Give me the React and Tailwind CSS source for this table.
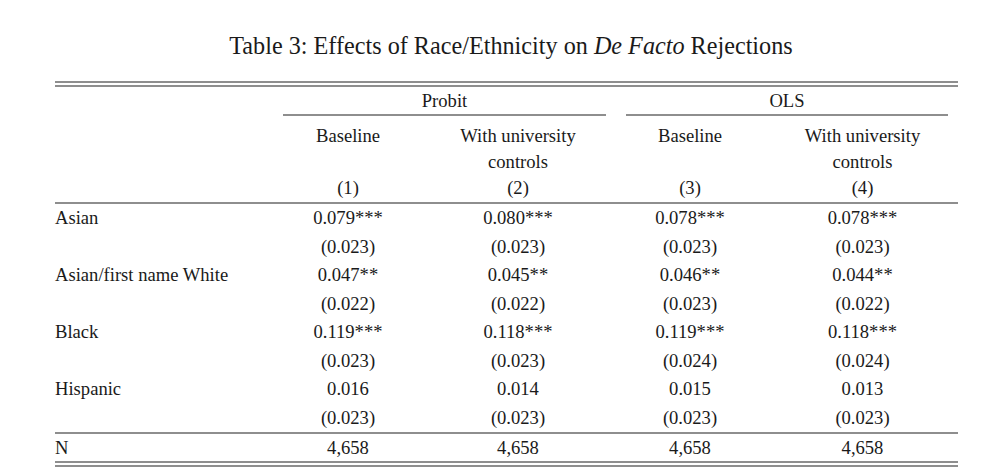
import React from "react";

const rows = [
  ["Asian", ["0.079***", "0.080***", "0.078***", "0.078***"], ["(0.023)", "(0.023)", "(0.023)", "(0.023)"]],
  ["Asian/first name White", ["0.047**", "0.045**", "0.046**", "0.044**"], ["(0.022)", "(0.022)", "(0.023)", "(0.022)"]],
  ["Black", ["0.119***", "0.118***", "0.119***", "0.118***"], ["(0.023)", "(0.023)", "(0.024)", "(0.024)"]],
  ["Hispanic", ["0.016", "0.014", "0.015", "0.013"], ["(0.023)", "(0.023)", "(0.023)", "(0.023)"]],
];

const cols = "grid grid-cols-[208px_170px_170px_174px_171px_10px]";

function Row({ label, vals, h = "h-[28.5px]" }) {
  return (
    <div className={`${cols} ${h} items-center`}>
      <div>{label}</div>
      {vals.map((v, i) => (
        <div key={i} className="text-center">{v}</div>
      ))}
      <div />
    </div>
  );
}

export default function App() {
  return (
    <div className="w-[1000px] h-[476px] bg-white text-[#1a1a1a] font-['Liberation_Serif',serif] overflow-hidden">
      <div className="pt-[32px] pl-[22px] text-center text-[24.2px] leading-[28px]">
        Table 3: Effects of Race/Ethnicity on <i>De Facto</i> Rejections
      </div>
      <div className="ml-[55px] w-[903px] mt-[21px] text-[18.6px]">
        <div className="flex flex-col gap-[2px]">
          <div className="h-[2px] bg-[#8e8e8e]" />
          <div className="h-[2px] bg-[#8e8e8e]" />
        </div>
        <div className="flex h-[27px] items-center">
          <div className="w-[228px]" />
          <div className="w-[323px] text-center">Probit</div>
          <div className="w-[20px]" />
          <div className="w-[322px] text-center">OLS</div>
        </div>
        <div className="flex">
          <div className="w-[228px]" />
          <div className="w-[323px] h-[2px] bg-[#8e8e8e]" />
          <div className="w-[20px]" />
          <div className="w-[322px] h-[2px] bg-[#8e8e8e]" />
        </div>
        <div className="pt-[6px] pb-[2px]">
          <Row label="" vals={["Baseline", "With university", "Baseline", "With university"]} h="h-[26px]" />
          <Row label="" vals={["", "controls", "", "controls"]} h="h-[26px]" />
          <Row label="" vals={["(1)", "(2)", "(3)", "(4)"]} h="h-[26px]" />
        </div>
        <div className="h-[2px] bg-[#8e8e8e]" />
        {rows.map(([label, v, se]) => (
          <React.Fragment key={label}>
            <Row label={label} vals={v} />
            <Row label="" vals={se} />
          </React.Fragment>
        ))}
        <div className="h-[2px] bg-[#8e8e8e]" />
        <Row label="N" vals={["4,658", "4,658", "4,658", "4,658"]} h="h-[27px]" />
        <div className="flex flex-col gap-[2px]">
          <div className="h-[2px] bg-[#8e8e8e]" />
          <div className="h-[2px] bg-[#8e8e8e]" />
        </div>
      </div>
    </div>
  );
}
